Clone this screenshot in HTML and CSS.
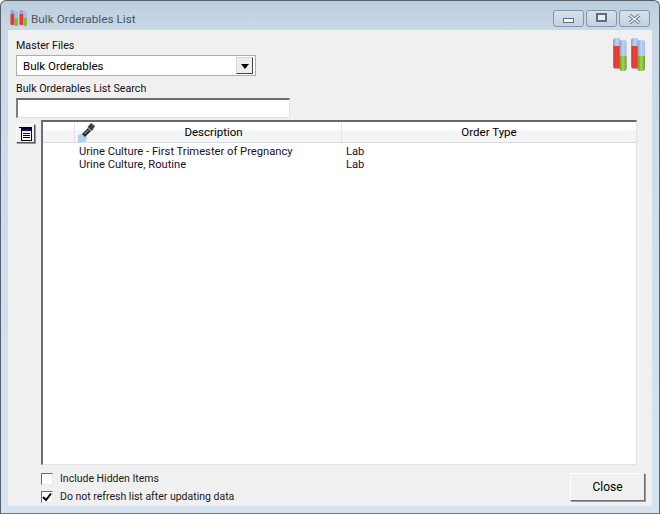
FILE: index.html
```html
<!DOCTYPE html>
<html lang="en">
<head>
<meta charset="utf-8">
<title>Bulk Orderables List</title>
<link rel="stylesheet" href="styles.css">
</head>
<body>
<div class="window">
  <div class="titlebar">
    <svg class="title-icon" width="17" height="16" viewBox="0 0 17 16">
      <rect x="0.500" y="0" width="4" height="15" rx="1.500" fill="#8fa9dc"/>
      <path d="M0.500 4H4.500V14Q4.500 15 2.500 15Q0.500 15 0.500 14Z" fill="#f0342e"/>
      <rect x="4.500" y="1" width="3.500" height="15" rx="1.500" fill="#a5bdea"/>
      <path d="M4.500 8H8V15Q8 16 6.200 16Q4.500 16 4.500 15Z" fill="#86b83c"/>
      <rect x="9.500" y="0" width="4" height="15" rx="1.500" fill="#8fa9dc"/>
      <path d="M9.500 4H13.500V14Q13.500 15 11.500 15Q9.500 15 9.500 14Z" fill="#f0342e"/>
      <rect x="13.500" y="1" width="3.500" height="15" rx="1.500" fill="#a5bdea"/>
      <path d="M13.500 8H17V15Q17 16 15.200 16Q13.500 16 13.500 15Z" fill="#86b83c"/>
    </svg>
    <span class="title-text">Bulk Orderables List</span>
    <div class="caption-buttons">
      <div class="caption-btn"><span class="glyph-min"></span></div>
      <div class="caption-btn"><span class="glyph-max"></span></div>
      <div class="caption-btn">
        <svg width="13" height="10" viewBox="0 0 13 10"><path d="M1.500 1L11.500 9M11.500 1L1.500 9" stroke="#6a7686" stroke-width="3.200" fill="none"/><path d="M1.500 1L11.500 9M11.500 1L1.500 9" stroke="#f4f6f9" stroke-width="1.400" fill="none"/></svg>
      </div>
    </div>
  </div>
  <div class="client">
    <svg class="big-icon" width="33" height="33" viewBox="0 0 33 33">
      <defs>
        <linearGradient id="glass" x1="0" x2="1" y1="0" y2="0"><stop offset="0" stop-color="#8e9fbe"/><stop offset="0.5" stop-color="#bcd4fd"/><stop offset="1" stop-color="#a3b9e2"/></linearGradient>
        <linearGradient id="red" x1="0" x2="1" y1="0" y2="0"><stop offset="0" stop-color="#a84a48"/><stop offset="0.4" stop-color="#ff3b30"/><stop offset="1" stop-color="#e0302a"/></linearGradient>
        <linearGradient id="green" x1="0" x2="1" y1="0" y2="0"><stop offset="0" stop-color="#5f9a22"/><stop offset="0.5" stop-color="#a2d848"/><stop offset="1" stop-color="#6d9f30"/></linearGradient>
      </defs>
      <rect x="0" y="0" width="7.500" height="31" rx="2.500" fill="url(#glass)"/>
      <path d="M0.500 8H7.500V28Q7.500 30.500 4 30.500Q0.500 30.500 0.500 28Z" fill="url(#red)"/>
      <rect x="6.500" y="2" width="7" height="31" rx="2.500" fill="url(#glass)"/>
      <path d="M6.500 18H13.500V30Q13.500 33 10 33Q6.500 33 6.500 30Z" fill="url(#green)"/>
      <rect x="18" y="0" width="7.500" height="31" rx="2.500" fill="url(#glass)"/>
      <path d="M18.500 8H25.500V28Q25.500 30.500 22 30.500Q18.500 30.500 18.500 28Z" fill="url(#red)"/>
      <rect x="24.500" y="2" width="7.500" height="31" rx="2.500" fill="url(#glass)"/>
      <path d="M24.500 18H32V30Q32 33 28 33Q24.500 33 24.500 30Z" fill="url(#green)"/>
    </svg>
    <div class="label label-master">Master Files</div>
    <div class="combo">
      <span class="combo-value">Bulk Orderables</span>
      <span class="combo-arrow"><span class="arrow-down"></span></span>
    </div>
    <div class="label label-search">Bulk Orderables List Search</div>
    <div class="search-input"></div>
    <div class="list-row">
      <div class="tool-btn">
        <svg width="14" height="14" viewBox="0 0 14 14">
          <path d="M0 .5H13" stroke="#000" fill="none"/>
          <rect x="2.500" y="1.500" width="10" height="12" fill="#fff" stroke="#000"/>
          <rect x="3" y="2" width="9" height="2" fill="#0000d0"/>
          <path d="M4 6.500H11M4 8.500H11M4 10.500H11" stroke="#000"/>
        </svg>
      </div>
      <div class="grid">
        <div class="grid-head">
          <div class="head-cell head-index"></div>
          <div class="head-cell head-search">
            <svg width="18" height="19" viewBox="0 0 18 19">
              <path d="M0 12L5 10L9 15L7 19H0Z" fill="#a9d4f7"/>
              <path d="M4 11L10 5L13 8L7 14Z" fill="#2b2b2b"/>
              <path d="M9.500 4L13 0L17 3L14 8Z" fill="#3f3f3f"/>
              <path d="M6.500 11L11 6.500" stroke="#b5b5b5" fill="none"/>
            </svg>
          </div>
          <div class="head-cell head-desc">Description</div>
          <div class="head-cell head-type">Order Type</div>
        </div>
        <div class="grid-row"><span class="cell-desc">Urine Culture - First Trimester of Pregnancy</span><span class="cell-type">Lab</span></div>
        <div class="grid-row"><span class="cell-desc">Urine Culture, Routine</span><span class="cell-type">Lab</span></div>
      </div>
    </div>
    <div class="footer">
      <div class="checks">
        <label class="check"><span class="box"></span>Include Hidden Items</label>
        <label class="check"><span class="box"><svg width="10" height="10" viewBox="0 0 10 10"><path d="M1 5L4 8L9 1.500" stroke="#000" stroke-width="2" fill="none"/></svg></span>Do not refresh list after updating data</label>
      </div>
      <div class="close-btn">Close</div>
    </div>
  </div>
</div>
</body>
</html>
```
FILE: styles.css
```css
* { box-sizing: border-box; }
html, body { margin: 0; padding: 0; width: 660px; height: 514px; overflow: hidden; }
body { font-family: Roboto, "Liberation Sans", Arial, sans-serif; font-size: 10.7px; color: #000; }
.window {
  width: 660px; height: 514px; display: flex; flex-direction: column;
  border: 1px solid #58606a; border-bottom-color: #6a7680; border-radius: 6px 6px 0 0;
  background: linear-gradient(to bottom, #bccddd 0, #c9d9e8 30px, #d6e4f1 100%);
  padding: 0 7px 7px 7px;
}
.titlebar { height: 29px; flex: none; display: flex; align-items: center; padding-left: 2px; }
.title-icon { margin-right: 4px; margin-top: 5px; }
.title-text { font-size: 11.8px; color: #4c5560; margin-top: 7px; }
.caption-buttons { margin-left: auto; display: flex; gap: 2px; align-self: flex-start; margin-top: 9px; margin-right: 2px; }
.caption-btn {
  width: 31px; height: 17px; border: 1px solid #8496ae; border-radius: 3px;
  background: linear-gradient(to bottom, #d6e1ec, #c2d1e1);
  display: flex; align-items: center; justify-content: center;
}
.glyph-min { width: 11px; height: 5px; border: 1px solid #606c7a; background: #f4f6f8; margin-top: 4px; }
.glyph-max { width: 11px; height: 9px; border: 2px solid #606c7a; background: #e6ecf3; margin-top: -2px; }
.client {
  flex: 1; position: relative; background: #f0f0f0;
  display: flex; flex-direction: column; padding: 9px 8px 0 8px;
}
.big-icon { position: absolute; top: 8px; right: 6px; }
.label { height: 13px; line-height: 13px; white-space: nowrap; color: #111; }
.combo {
  margin-top: 3px; width: 240px; height: 21px; background: #fff; border: 1px solid #acacac; font-size: 11.5px;
  display: flex; align-items: center; justify-content: space-between; padding: 0 2px 0 6px;
}
.combo-arrow {
  width: 17px; height: 17px; background: #eee; border: 1px solid #555;
  border-color: #d8d8d8 #444 #444 #d8d8d8; display: flex; align-items: center; justify-content: center;
}
.arrow-down { width: 0; height: 0; border-left: 4px solid transparent; border-right: 4px solid transparent; border-top: 5px solid #000; margin-top: 1px; }
.label-search { margin-top: 6px; }
.search-input {
  margin-top: 3px; width: 274px; height: 20px; background: #fff;
  border: 1px solid #e3e3e3; border-top: 2px solid #6b6b6b; border-left: 2px solid #7d7d7d;
}
.list-row { display: flex; align-items: flex-start; margin-top: 2px; }
.tool-btn {
  margin: 4px 0 0 0; width: 19px; height: 19px; background: #f0f0f0;
  border: 1px solid; border-color: #fff #555 #555 #fff; box-shadow: 1px 1px 0 #999;
  display: flex; align-items: center; justify-content: center;
}
.grid {
  margin-left: 6px; width: 596px; height: 345px; background: #fff;
  border: 1px solid #e3e3e3; border-top: 2px solid #686868; border-left: 2px solid #6e6e6e;
}
.grid-head { display: flex; height: 21px; background: linear-gradient(to bottom, #ffffff 0, #ffffff 8px, #f3f4f6 9px, #f3f4f6 100%); border-bottom: 1px solid #dcdcdc; }
.head-cell { border-right: 1px solid #e4e6ea; line-height: 21px; text-align: center; white-space: nowrap; font-size: 11.5px; }
.head-index { width: 32px; flex: none; }
.head-search { width: 18px; flex: none; text-align: left; border-right: none; padding: 1px 0 0 3px; line-height: 0; }
.head-desc { width: 249px; flex: none; padding-right: 7px; }
.head-type { flex: 1; border-right: none; }
.grid-row { display: flex; height: 13px; line-height: 13px; font-size: 11.2px; color: #1c1030; white-space: nowrap; }
.grid-row:nth-child(2) { margin-top: 2px; }
.cell-desc { margin-left: 36px; width: 267px; }
.footer { display: flex; justify-content: space-between; margin-top: 7px; }
.checks { display: flex; flex-direction: column; gap: 6px; padding: 1px 0 0 25px; }
.check { display: flex; align-items: center; height: 12px; font-size: 10.5px; line-height: 14px; color: #1a1a1a; white-space: nowrap; }
.box { width: 12px; height: 12px; background: #fff; border: 1px solid #e8e8e8; border-top: 1px solid #6b6b6b; border-left: 1px solid #6b6b6b; margin-right: 7px; display: flex; align-items: center; justify-content: center; }
.close-btn {
  width: 75px; height: 28px; margin-top: 1px; margin-right: -1px; background: #f0f0f0; font-size: 12px;
  border: 1px solid; border-color: #fff #6e6e6e #6e6e6e #fff; box-shadow: 1px 1px 0 #9a9a9a;
  display: flex; align-items: center; justify-content: center;
}
```
